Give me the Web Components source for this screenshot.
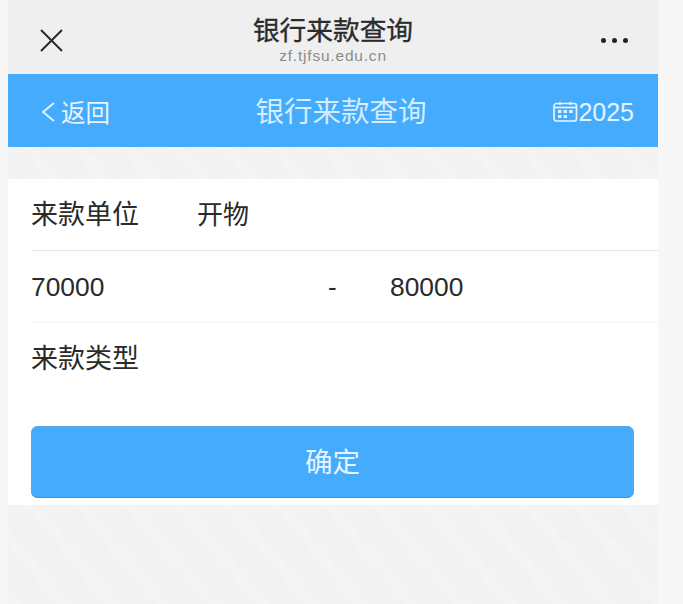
<!DOCTYPE html>
<html lang="zh">
<head>
<meta charset="utf-8">
<title>银行来款查询</title>
<style>
  html, body { margin: 0; height: 100%; background: #f7f7f7; }
  body { font-family: "Liberation Sans", "Noto Sans CJK SC", sans-serif; overflow: hidden; }
</style>
</head>
<body>
<bank-app>
  <wx-bar title="银行来款查询" host-name="zf.tjfsu.edu.cn"></wx-bar>
  <page-header title="银行来款查询" year="2025"></page-header>
  <query-form></query-form>
</bank-app>

<script>
// App shell, with the patterned page background
class BankApp extends HTMLElement {
  constructor() {
    super();
    this.attachShadow({ mode: 'open' });
    this.shadowRoot.innerHTML = `
      <style>
        :host {
          display: block;
          width: 650px;
          height: 604px;
          margin-left: 8px;
          background-color: #f3f3f3;
          background-image:
            repeating-linear-gradient(50deg, rgba(255,255,255,.14) 0 10px, transparent 10px 38px),
            repeating-linear-gradient(-50deg, rgba(236,236,236,.16) 0 10px, transparent 10px 38px);
        }
      </style>
      <slot></slot>
    `;
  }
}

// WeChat style top bar
class WxBar extends HTMLElement {
  constructor() {
    super();
    this.attachShadow({ mode: 'open' });
  }

  connectedCallback() {
    this.shadowRoot.innerHTML = `
      <style>
        :host {
          display: grid;
          grid-template-columns: 100px 1fr 100px;
          align-items: center;
          height: 74px;
          background: #efefef;
        }
        .close { display: block; margin: 6px 0 0 30px; width: 26px; height: 26px; }
        .mid { text-align: center; padding-top: 4px; }
        .title { font-size: 26.7px; line-height: 32px; color: #2b2b2b; -webkit-text-stroke: .35px #2b2b2b; }
        .host { font-size: 15.5px; line-height: 17px; color: #8c8c8c; letter-spacing: .8px; }
        .more { justify-self: end; display: flex; gap: 6px; margin: 6px 30px 0 0; }
        .more i { width: 5px; height: 5px; border-radius: 50%; background: #222; }
      </style>
      <svg class="close" viewBox="0 0 26 26" fill="none" stroke="#2a2a2a" stroke-width="2">
        <path d="M3 3 L24 24 M24 3 L3 24"/>
      </svg>
      <div class="mid">
        <div class="title">${this.getAttribute('title')}</div>
        <div class="host">${this.getAttribute('host-name')}</div>
      </div>
      <div class="more"><i></i><i></i><i></i></div>
    `;
  }
}

// Blue header of the page itself
class PageHeader extends HTMLElement {
  constructor() {
    super();
    this.attachShadow({ mode: 'open' });
  }

  connectedCallback() {
    this.shadowRoot.innerHTML = `
      <style>
        :host {
          display: grid;
          grid-template-columns: 150px 1fr 150px;
          align-items: center;
          height: 73px;
          background: #45abfd;
          color: #e6f4ff;
        }
        .back { display: flex; align-items: center; padding-left: 32px; font-size: 24.5px; margin-top: 2px; }
        .back svg { width: 15px; height: 24px; margin-right: 6px; }
        .title { text-align: center; font-size: 28.5px; margin-top: -3px; padding-left: 16px; color: #d5edff; }
        .year { display: flex; align-items: center; justify-content: flex-end; padding-right: 24px; font-size: 25px; margin-top: 3px; }
        .year svg { width: 25px; height: 22px; }
      </style>
      <div class="back">
        <svg viewBox="0 0 15 24" fill="none" stroke="#e6f4ff" stroke-width="1.8"><path d="M14 3 L3 12 L14 21"/></svg>
        <span>返回</span>
      </div>
      <div class="title">${this.getAttribute('title')}</div>
      <div class="year">
        <svg viewBox="0 0 25 22" fill="none" stroke="#e6f4ff" stroke-width="1.7">
          <rect x="1" y="2.5" width="22.5" height="17.5" rx="2.5"/>
          <path d="M7 1 V4 M17.5 1 V4"/>
          <path d="M1 6.5 H23.5"/>
          <g fill="#e6f4ff" stroke="none">
            <rect x="5" y="9" width="3.4" height="3"/>
            <rect x="10.6" y="9" width="3.4" height="3"/>
            <rect x="16.2" y="9" width="3.4" height="3"/>
            <rect x="5" y="14" width="3.4" height="3"/>
            <rect x="10.6" y="14" width="3.4" height="3"/>
          </g>
        </svg>
        <span>${this.getAttribute('year')}</span>
      </div>
    `;
  }
}

// One row of the form
class FormRow extends HTMLElement {
  constructor() {
    super();
    this.attachShadow({ mode: 'open' });
    this.shadowRoot.innerHTML = `
      <style>
        :host {
          display: flex;
          align-items: center;
          height: 71px;
          margin-left: 23px;
          font-size: 26px;
          color: #2a2a2a;
          border-bottom: 1px solid var(--line, transparent);
        }
      </style>
      <slot></slot>
    `;
  }
}

class QueryForm extends HTMLElement {
  constructor() {
    super();
    this.attachShadow({ mode: 'open' });
  }

  connectedCallback() {
    this.shadowRoot.innerHTML = `
      <style>
        :host {
          display: block;
          margin-top: 32px;
          height: 326px;
          background: #fff;
        }
        .label { font-size: 27px; width: 166px; margin-bottom: 4px; }
        .value { font-size: 26px; margin-bottom: 4px; }
        .num { flex: none; width: 297px; font-size: 26.4px; margin-top: 2px; }
        .dash { flex: none; width: 62px; font-size: 26px; margin-top: 2px; }
        .first { --line: #e6e6e6; }
        .second { --line: #f6f6f6; }
        button {
          display: block;
          width: 603px;
          height: 72px;
          margin: 31px 0 0 23px;
          padding: 0 0 4px;
          border: none;
          border-radius: 7px;
          background: #45abfd;
          box-shadow: inset 0 -1px 0 #3d94dc, inset 0 1px 0 #5aa9e6;
          color: #e6f4ff;
          font: 27.5px "Liberation Sans", "Noto Sans CJK SC", sans-serif;
        }
      </style>
      <form-row class="first"><span class="label">来款单位</span><span class="value">开物</span></form-row>
      <form-row class="second"><span class="num">70000</span><span class="dash">-</span><span class="num">80000</span></form-row>
      <form-row><span class="label">来款类型</span></form-row>
      <button type="button">确定</button>
    `;
  }
}

customElements.define('bank-app', BankApp);
customElements.define('wx-bar', WxBar);
customElements.define('page-header', PageHeader);
customElements.define('form-row', FormRow);
customElements.define('query-form', QueryForm);
</script>
</body>
</html>
